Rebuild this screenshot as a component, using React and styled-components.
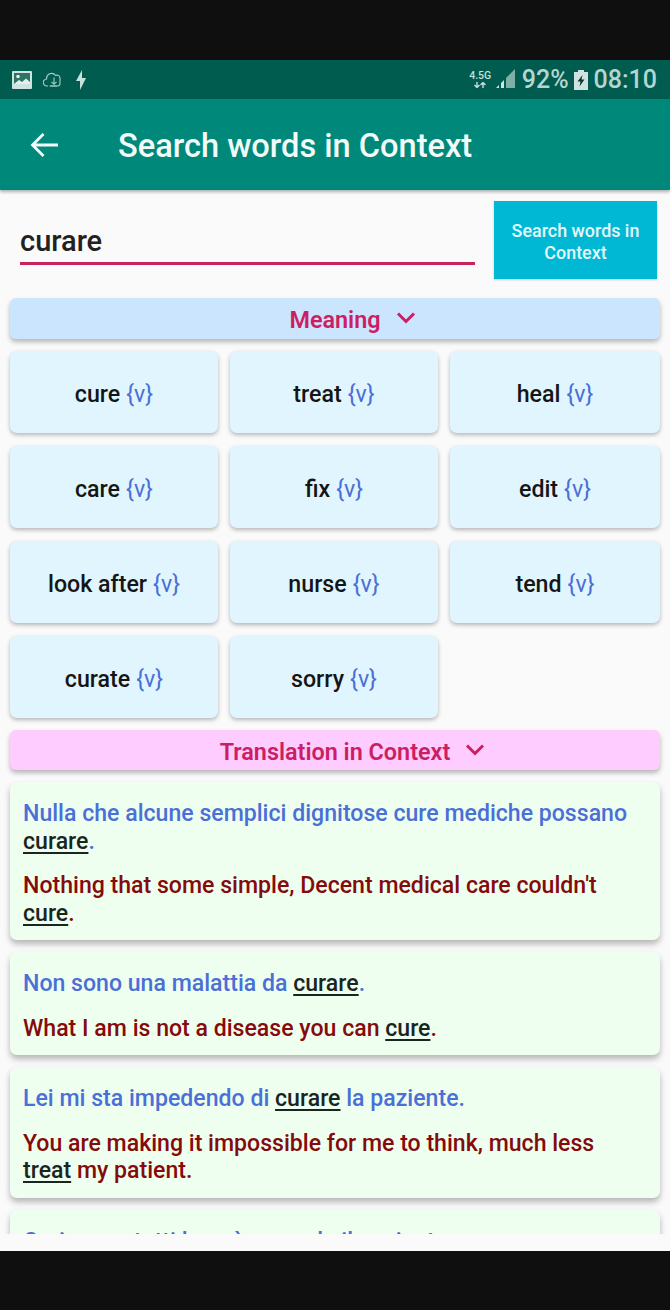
import React from "react";
import styled, { createGlobalStyle } from "styled-components";

const Global = createGlobalStyle`
  html, body { margin: 0; padding: 0; background: #0f0f0f; }
  body { font-family: Roboto, "Liberation Sans", sans-serif; }
`;
const Page = styled.div`
  width: 670px; height: 1310px; display: flex; flex-direction: column;
  background: #0f0f0f; overflow: hidden;
`;
const BlackBar = styled.div`height: ${p => p.$h}px; flex: none; background: #0f0f0f;`;
const StatusBar = styled.div`
  height: 39px; flex: none; background: #005c4f; color: #b5d6d0;
  display: flex; align-items: center; justify-content: space-between; padding: 0 13px 0 12px;
`;
const StatusGroup = styled.div`display: flex; align-items: center; gap: ${p => p.$gap || 0}px;`;
const StatusText = styled.span`font-size: 25px; font-weight: 500; line-height: 1; white-space: nowrap;`;
const NetLabel = styled.div`
  font-size: 10.5px; font-weight: 500; line-height: 10px; width: 23px; margin-right: 4px; color: #c6e0db;
  display: flex; flex-direction: column; align-items: center; gap: 1px;
`;
const AppBar = styled.header`
  height: 91px; flex: none; background: #00897b; color: #fff; display: flex; align-items: center;
  padding: 0 0 0 30px; box-shadow: 0 2px 3px rgba(0,0,0,.3); position: relative; z-index: 2;
`;
const Title = styled.h1`
  margin: 4px 0 0 59px; font-size: 32.6px; font-weight: 500; line-height: 1; color: #f2fbfa;
`;
const Content = styled.main`
  height: 1061px; flex: none; background: #fafafa; position: relative;
`;
const Scroller = styled.div`
  height: 1044px; overflow: hidden; padding: 11px 10px 0; box-sizing: border-box;
  display: flex; flex-direction: column;
`;
const SearchRow = styled.div`display: flex; align-items: flex-start; padding: 0 3px 0 10px; height: 97px; flex: none;`;
const Field = styled.div`
  width: 455px; margin-top: 9px; border-bottom: 3px solid #c7245f;
  font-size: 29px; font-weight: 500; color: #212121; line-height: 62px; height: 52px;
`;
const SearchButton = styled.button`
  margin-left: 19px; width: 163px; height: 78px; border: 0; background: #00b8d4; color: #e6f8fb;
  font: 500 17.9px/22px Roboto, sans-serif; padding: 3px 10px 0; box-shadow: 0 1px 2px rgba(0,0,0,.2);
`;
const SectionBar = styled.div`
  height: ${p => p.$h}px; flex: none; border-radius: 6px; background: ${p => p.$bg};
  display: flex; align-items: center; justify-content: center; color: #cc1f63;
  font-size: 23.4px; font-weight: 600; box-shadow: 0 3px 5px rgba(0,0,0,.28); padding-top: 3px; box-sizing: border-box;
`;
const SectionLabel = styled.span`position: relative;`;
const ChevronSlot = styled.span`position: absolute; left: 100%; top: 5px; margin-left: 15px; line-height: 0;`;
const Grid = styled.div`
  display: grid; grid-template-columns: 208px 208px 210px; column-gap: 12px; row-gap: 13px;
  margin: 12px 0;
`;
const WordCard = styled.div`
  height: 82px; border-radius: 7px; background: #e1f5fe; display: flex; align-items: center;
  justify-content: center; font-size: 23.2px; font-weight: 500; color: #151515; box-shadow: 0 2px 4px rgba(0,0,0,.28); gap: 6px;
  padding-top: 3px; box-sizing: border-box;
`;
const Pos = styled.span`color: #4a6fd6; font-weight: 400;`;
const Sentence = styled.article`
  flex: none; margin-top: 12px; padding: 18px 13px 13px; border-radius: 7px; background: #eefff0;
  box-shadow: 0 4px 6px rgba(0,0,0,.28); font-size: 23.1px; font-weight: 500; line-height: 27.5px;
`;
const Source = styled.p`margin: 0 0 17px; color: #4a6fd6;`;
const Target = styled.p`margin: 0; color: #850a0a;`;
const Hit = styled.u`color: #1b251f; text-underline-offset: 3px; text-decoration-thickness: 1.5px;`;

const Chevron = () => (
  <svg width="20" height="14" viewBox="0 0 20 14" fill="none" stroke="#cc1f63" strokeWidth="3">
    <path d="M2 2.5 10 10.5 18 2.5" />
  </svg>
);

const words = ["cure","treat","heal","care","fix","edit","look after","nurse","tend","curate","sorry"];

export default function App() {
  return (
    <Page>
      <Global />
      <BlackBar $h={60} />
      <StatusBar>
        <StatusGroup $gap={11}>
          <svg width="20" height="18" viewBox="0 0 20 18">
            <rect width="20" height="18" rx="1" fill="#cfe4e0" />
            <rect x="2" y="2" width="16" height="11" fill="#2d7366" />
            <circle cx="6" cy="5.5" r="1.8" fill="#e3f0ee" />
            <path d="M2 13 7 9 10 11 14 7.5 18 11V13Z" fill="#e3f0ee" />
          </svg>
          <svg width="18" height="17" viewBox="0 0 18 17" fill="none" stroke="#a9cdc6" strokeWidth="1.1">
            <path d="M5 15H4a3.5 3.5 0 0 1-.4-7A5 5 0 0 1 12.6 4.5 3 3 0 0 1 17 7.5V12.5A2.5 2.5 0 0 1 14.5 15H6.5" />
            <path d="M11 6.5V13M8.5 10.8 11 13.3 13.5 10.8M7.5 15H14" />
          </svg>
          <svg width="12" height="20" viewBox="0 0 12 20" style={{marginLeft: 3}}>
            <path d="M7 0 1 11H5L5 20 11 8H7Z" fill="#c6e0db" />
          </svg>
        </StatusGroup>
        <StatusGroup>
          <NetLabel>
            <span>4.5G</span>
            <svg width="14" height="6" viewBox="0 0 14 6" fill="none" stroke="#c6e0db" strokeWidth="1.4">
              <path d="M4 0V5M1.5 3 4 5.5 6.5 3M10 6V1M7.5 3 10 .5 12.5 3" />
            </svg>
          </NetLabel>
          <svg width="19" height="20" viewBox="0 0 19 20" style={{margin: "-2px 7px 0 0"}}>
            <path d="M19 0V19H10V9Z" fill="#7fb0a7" />
            <path d="M0 19 3 16V19ZM5 19V14L8 11V19Z" fill="#cfe4e0" />
          </svg>
          <StatusText>92%</StatusText>
          <svg width="14" height="20" viewBox="0 0 14 20" style={{margin: "0 6px 0 5px"}}>
            <path d="M4 0H10V2H14V20H0V2H4Z" fill="#cfe4e0" />
            <path d="M8.5 5 3.5 11.5H6.5L5.5 16.5 10.5 9.5H7.5Z" fill="#12352f" />
          </svg>
          <StatusText>08:10</StatusText>
        </StatusGroup>
      </StatusBar>
      <AppBar>
        <svg width="29" height="26" viewBox="0 0 29 26" fill="none" stroke="#f2fbfa" strokeWidth="2.8">
          <path d="M28 13H3M13.5 2 2.5 13 13.5 24" />
        </svg>
        <Title>Search words in Context</Title>
      </AppBar>
      <Content>
        <Scroller>
          <SearchRow>
            <Field>curare</Field>
            <SearchButton>Search words in Context</SearchButton>
          </SearchRow>
          <SectionBar $bg="#cce5fe" $h={41}>
            <SectionLabel>Meaning<ChevronSlot><Chevron /></ChevronSlot></SectionLabel>
          </SectionBar>
          <Grid>
            {words.map(w => (
              <WordCard key={w}><span>{w}</span><Pos>{"{v}"}</Pos></WordCard>
            ))}
          </Grid>
          <SectionBar $bg="#ffccff" $h={40}>
            <SectionLabel>Translation in Context<ChevronSlot><Chevron /></ChevronSlot></SectionLabel>
          </SectionBar>
          <Sentence>
            <Source>Nulla che alcune semplici dignitose cure mediche possano <Hit>curare</Hit>.</Source>
            <Target>Nothing that some simple, Decent medical care couldn't <Hit>cure</Hit>.</Target>
          </Sentence>
          <Sentence>
            <Source>Non sono una malattia da <Hit>curare</Hit>.</Source>
            <Target>What I am is not a disease you can <Hit>cure</Hit>.</Target>
          </Sentence>
          <Sentence>
            <Source>Lei mi sta impedendo di <Hit>curare</Hit> la paziente.</Source>
            <Target>You are making it impossible for me to think, much less <Hit>treat</Hit> my patient.</Target>
          </Sentence>
          <Sentence>
            <Source>Curi come tutti loro, è normale il paziente.</Source>
          </Sentence>
        </Scroller>
      </Content>
      <BlackBar $h={59} />
    </Page>
  );
}
